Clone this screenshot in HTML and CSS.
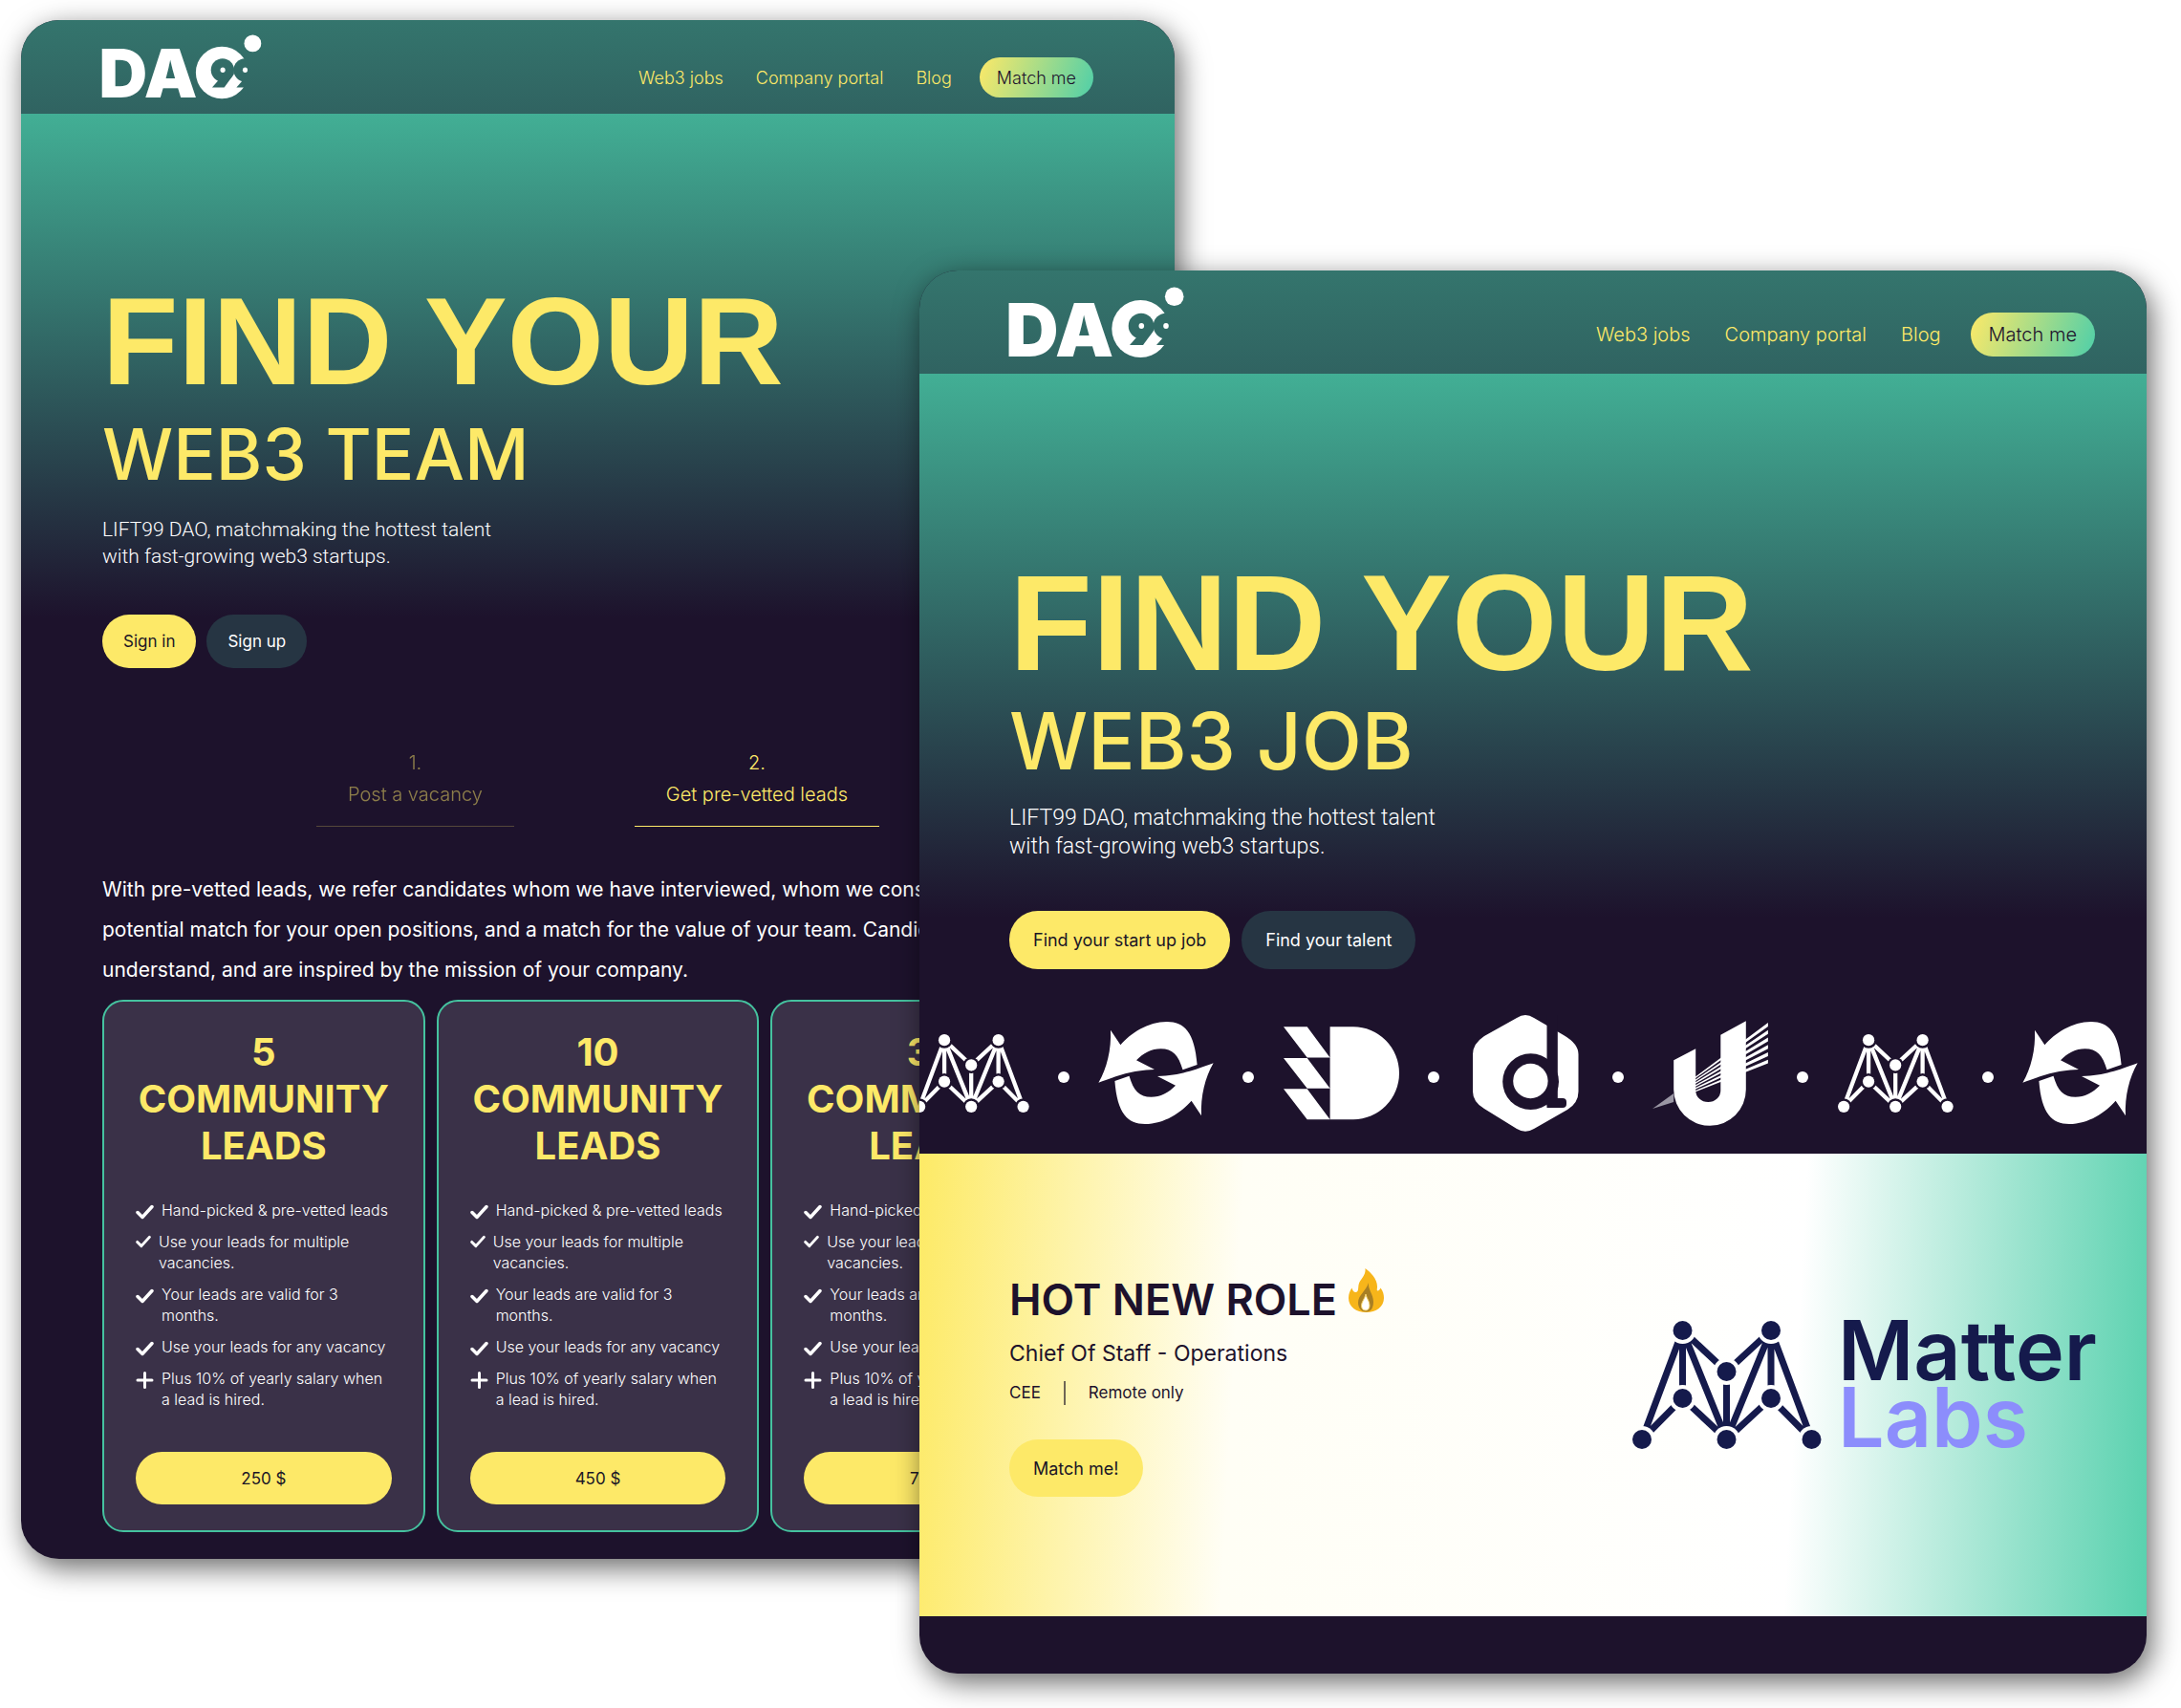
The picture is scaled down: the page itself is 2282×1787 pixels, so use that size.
FILE: index.html
```html
<!DOCTYPE html>
<html lang="en">
<head>
<meta charset="utf-8">
<meta name="viewport" content="width=device-width, initial-scale=1">
<title>LIFT99 DAO – Find your web3 team, find your web3 job</title>
<link rel="stylesheet" href="styles.css">
</head>
<body>
<svg class="sprite" aria-hidden="true">
  <defs>
    <mask id="orbit-cut" maskUnits="userSpaceOnUse" x="0" y="0" width="183" height="78">
      <circle cx="137.3" cy="44" r="30" fill="#fff"/>
      <circle cx="138" cy="41" r="13.3" fill="#000"/>
      <path d="M126 61H140L151 46V38L134 52Z" fill="#000"/>
      <circle cx="164" cy="41" r="13.3" fill="#000"/>
      <path d="M154 61H180V38L162 52Z" fill="#000"/>
      <ellipse cx="138.3" cy="41" rx="2.8" ry="3" fill="#fff"/>
    </mask>
    <mask id="node-gaps" maskUnits="userSpaceOnUse" x="-10" y="-10" width="220" height="154">
      <rect x="-10" y="-10" width="220" height="154" fill="#fff"/>
      <g fill="#000">
        <circle cx="52.5" cy="10" r="14"/><circle cx="145" cy="10" r="14"/><circle cx="98.5" cy="53" r="14"/>
        <circle cx="52.5" cy="81" r="14"/><circle cx="145" cy="81" r="14"/>
        <circle cx="10" cy="124" r="14"/><circle cx="98.5" cy="124" r="14"/><circle cx="187.5" cy="124" r="14"/>
      </g>
    </mask>
    <clipPath id="ray-area"><rect x="45" y="0" width="80" height="122"/></clipPath>
  </defs>
  <symbol id="orbit" viewBox="0 0 183 78">
    <rect width="183" height="78" fill="#fff" mask="url(#orbit-cut)"/>
    <ellipse cx="164" cy="41" rx="2.8" ry="3" fill="#fff"/>
    <circle cx="172.7" cy="10.3" r="9.8" fill="#fff"/>
  </symbol>
  <symbol id="matter" viewBox="0 0 198 134">
    <g mask="url(#node-gaps)">
      <path fill="none" stroke="currentColor" stroke-width="7" d="M52.5 10L10 124M52.5 10V81M52.5 10L98.5 124M52.5 10L98.5 53M52.5 81L10 124M52.5 81L98.5 124M98.5 53V124M145 10L187.5 124M145 10V81M145 10L98.5 124M145 10L98.5 53M145 81L187.5 124M145 81L98.5 124"/>
    </g>
    <g fill="currentColor">
      <circle cx="52.5" cy="10" r="10"/><circle cx="145" cy="10" r="10"/><circle cx="98.5" cy="53" r="10"/>
      <circle cx="52.5" cy="81" r="10"/><circle cx="145" cy="81" r="10"/>
      <circle cx="10" cy="124" r="10"/><circle cx="98.5" cy="124" r="10"/><circle cx="187.5" cy="124" r="10"/>
    </g>
  </symbol>
  <symbol id="arrows" viewBox="0 0 121 122">
    <g fill="currentColor">
      <path id="arrow-half" d="M.4 70.7C9 56 14 36 13 15.7L23.4 31.3C34 19 52 7 72 7C90 7 101 18 103.6 52L88.5 57.3C84 42 78 35.3 65.5 35.3C56 35.3 47 40 40 47.3L59 57C34 58 22 63 .4 70.7Z"/>
      <use href="#arrow-half" transform="rotate(180 60.5 60.5)"/>
    </g>
  </symbol>
  <symbol id="flags" viewBox="0 0 121 122">
    <path fill="currentColor" d="M48.6 12.3H73A48 48.5 0 0 1 73 109.3H48.6ZM0 12.3H24.7L48.6 44.5H24.7ZM0 45H24.7L48.6 76.7H24.7ZM0 77.2H24.7L48.6 109.3H24.7Z"/>
  </symbol>
  <symbol id="hexagon" viewBox="0 0 121 122">
    <path fill="currentColor" d="M51 3Q60 -3 69 3L100 21Q115.5 30 115.5 41V80Q115.5 92 104 99L69 119Q60 124.5 51 119L17 98Q5 91 5 80V41Q5 30 17 22Z"/>
    <g fill="#1d122c">
      <circle cx="65.6" cy="69.7" r="29.4"/>
      <rect x="82.5" y="-5" width="11.3" height="102"/>
      <rect x="82.5" y="87" width="20.5" height="10" rx="4"/>
    </g>
    <circle cx="65.4" cy="69" r="18.2" fill="currentColor"/>
  </symbol>
  <symbol id="rays" viewBox="0 0 121 122">
    <path fill="#9a96a4" d="M0 98L22.2 82V91Z"/>
    <path fill="currentColor" d="M22.2 47.3L45.2 35.3V79A13 12 0 0 0 71.3 79V20.7L97.8 6.3V78A37.8 37.8 0 0 1 22.2 78Z"/>
    <path clip-path="url(#ray-area)" fill="currentColor" d="M0 98L120.9 8V12ZM0 98L120.9 15.8V19.8ZM0 98L120.9 23.5V27.5ZM0 98L120.9 31.2V35.2ZM0 98L120.9 39V43ZM0 98L120.9 46.7V50.5Z"/>
  </symbol>
  <symbol id="check" viewBox="0 0 19 16">
    <path fill="none" stroke="#fff" stroke-width="3.5" stroke-linecap="round" stroke-linejoin="round" d="M2 8.5L7 13.5L17 2.5"/>
  </symbol>
  <symbol id="plus" viewBox="0 0 19 18">
    <path fill="none" stroke="#fff" stroke-width="3" stroke-linecap="round" d="M2 9H17M9.5 1.5V16.5"/>
  </symbol>
</svg>

<main class="stage">
  <section class="window window--team">
    <header class="topbar">
      <a class="brand" href="#team" aria-label="LIFT99 DAO"><svg class="logo" viewBox="0 0 183 78"><text x="-4" y="73">DA</text><use href="#orbit" width="183" height="78"/></svg></a>
      <nav class="menu">
        <a href="#jobs">Web3 jobs</a>
        <a href="#portal">Company portal</a>
        <a href="#blog">Blog</a>
        <button class="pill pill--match" type="button">Match me</button>
      </nav>
    </header>
    <div class="hero">
      <h1 class="title">FIND YOUR</h1>
      <p class="subtitle">WEB3 TEAM</p>
      <p class="lead">LIFT99 DAO, matchmaking the hottest talent<br>with fast-growing web3 startups.</p>
      <div class="actions">
        <button class="pill pill--yellow" type="button">Sign in</button>
        <button class="pill pill--dark" type="button">Sign up</button>
      </div>
    </div>
    <div class="steps">
      <button class="step" type="button">1.<br>Post a vacancy</button>
      <button class="step step--active" type="button">2.<br>Get pre-vetted leads</button>
    </div>
    <p class="about">With pre-vetted leads, we refer candidates whom we have interviewed, whom we consider a<br>potential match for your open positions, and a match for the value of your team. Candidates<br>understand, and are inspired by the mission of your company.</p>
    <div class="plans">
      <article class="plan">
        <h2>5<br>COMMUNITY<br>LEADS</h2>
        <ul>
          <li><svg><use href="#check"/></svg><span>Hand-picked &amp; pre-vetted leads</span></li>
          <li class="tight"><svg><use href="#check"/></svg><span>Use your leads for multiple vacancies.</span></li>
          <li><svg><use href="#check"/></svg><span>Your leads are valid for 3<br>months.</span></li>
          <li><svg><use href="#check"/></svg><span>Use your leads for any vacancy</span></li>
          <li><svg><use href="#plus"/></svg><span>Plus 10% of yearly salary when<br>a lead is hired.</span></li>
        </ul>
        <button class="pill pill--yellow" type="button">250 $</button>
      </article>
      <article class="plan">
        <h2>10<br>COMMUNITY<br>LEADS</h2>
        <ul>
          <li><svg><use href="#check"/></svg><span>Hand-picked &amp; pre-vetted leads</span></li>
          <li class="tight"><svg><use href="#check"/></svg><span>Use your leads for multiple vacancies.</span></li>
          <li><svg><use href="#check"/></svg><span>Your leads are valid for 3<br>months.</span></li>
          <li><svg><use href="#check"/></svg><span>Use your leads for any vacancy</span></li>
          <li><svg><use href="#plus"/></svg><span>Plus 10% of yearly salary when<br>a lead is hired.</span></li>
        </ul>
        <button class="pill pill--yellow" type="button">450 $</button>
      </article>
      <article class="plan">
        <h2>30<br>COMMUNITY<br>LEADS</h2>
        <ul>
          <li><svg><use href="#check"/></svg><span>Hand-picked &amp; pre-vetted leads</span></li>
          <li class="tight"><svg><use href="#check"/></svg><span>Use your leads for multiple vacancies.</span></li>
          <li><svg><use href="#check"/></svg><span>Your leads are valid for 3<br>months.</span></li>
          <li><svg><use href="#check"/></svg><span>Use your leads for any vacancy</span></li>
          <li><svg><use href="#plus"/></svg><span>Plus 10% of yearly salary when<br>a lead is hired.</span></li>
        </ul>
        <button class="pill pill--yellow" type="button">750 $</button>
      </article>
    </div>
  </section>

  <section class="window window--job">
    <header class="topbar">
      <a class="brand" href="#job" aria-label="LIFT99 DAO"><svg class="logo" viewBox="0 0 183 78"><text x="-4" y="73">DA</text><use href="#orbit" width="183" height="78"/></svg></a>
      <nav class="menu">
        <a href="#jobs">Web3 jobs</a>
        <a href="#portal">Company portal</a>
        <a href="#blog">Blog</a>
        <button class="pill pill--match" type="button">Match me</button>
      </nav>
    </header>
    <div class="hero">
      <h1 class="title">FIND YOUR</h1>
      <p class="subtitle">WEB3 JOB</p>
      <p class="lead">LIFT99 DAO, matchmaking the hottest talent<br>with fast-growing web3 startups.</p>
      <div class="actions">
        <button class="pill pill--yellow" type="button">Find your start up job</button>
        <button class="pill pill--dark" type="button">Find your talent</button>
      </div>
    </div>
    <div class="partners">
      <svg><use href="#matter"/></svg><i></i>
      <svg><use href="#arrows"/></svg><i></i>
      <svg><use href="#flags"/></svg><i></i>
      <svg><use href="#hexagon"/></svg><i></i>
      <svg><use href="#rays"/></svg><i></i>
      <svg><use href="#matter"/></svg><i></i>
      <svg><use href="#arrows"/></svg>
    </div>
    <article class="role">
      <div class="role-text">
        <h2>HOT NEW ROLE
          <svg class="fire" viewBox="0 0 37 46" aria-hidden="true">
            <path fill="#f7b51a" d="M17.5 0C23 4 30 11 30 19C30 21 29.5 23 30 23.5C32 23.5 33 22 33.5 20.5C36 24 37 27 37 31C37 40 29 46 18.5 46C8 46 0 40 0 31C0 27 1.5 23 3.5 20.5C4 23 5.5 25 7.5 25C10.5 25 10 20.5 10.5 17.5C11.5 11.5 18.5 8 17.5 0Z"/>
            <path fill="#a87f24" d="M21 15C20 22 26 27 26 35C26 42 23 45.5 18.5 45.5C13 45.5 10 41 10 36C10 28 18 24 21 15Z"/>
            <path fill="#fff" stroke="#f7d36a" stroke-width="1" d="M18 27C19 32 22 34 22 39C22 42.5 20 44 18 44C15 44 13.5 42 13.5 39C13.5 35 17 32 18 27Z"/>
          </svg>
        </h2>
        <p class="role-name">Chief Of Staff - Operations</p>
        <p class="role-meta"><span>CEE</span><span>Remote only</span></p>
        <button class="pill pill--yellow" type="button">Match me!</button>
      </div>
      <svg class="company" viewBox="0 0 484 134" role="img" aria-label="Matter Labs">
        <use href="#matter" width="198" height="134"/>
        <text x="215" y="62">Matter</text>
        <text class="labs" x="215" y="132">Labs</text>
      </svg>
    </article>
  </section>
</main>
</body>
</html>
```
FILE: styles.css
```css
* { box-sizing: border-box; }

body {
  margin: 0;
  background: #fff;
  color: #fff;
  font-family: Inter, "Liberation Sans", sans-serif;
}

h1, h2, p, ul { margin: 0; padding: 0; }
button { font: inherit; color: inherit; border: 0; background: none; cursor: pointer; }
.sprite { position: absolute; width: 0; height: 0; }

/* Two overlapping windows share the middle column */
.stage {
  display: grid;
  grid-template-columns: 940fr 267fr 1017fr;
  align-items: start;
  padding: 21px 36px 36px 22px;
}

.window {
  grid-row: 1;
  overflow: hidden;
  border-radius: 40px;
  background: #1d122c;
  box-shadow: 5px 9px 30px rgba(0, 0, 0, 0.6);
}

.window--team {
  grid-column: 1 / 3;
  padding-bottom: 28px;
  --left: 85px;
  --right: 85px;
  --nav-size: 18px;
  --text-size: 17px;
}

.window--job {
  grid-column: 2 / 4;
  margin-top: 262px;
  padding-bottom: 60px;
  --left: 94px;
  --right: 54px;
  --nav-size: 20px;
  --text-size: 18px;
}

/* Header */
.topbar {
  display: flex;
  justify-content: space-between;
  align-items: flex-end;
  height: 98px;
  padding: 0 var(--right) 12px var(--left);
  background: linear-gradient(#34756d, #306361);
}
.window--job .topbar { height: 108px; padding-bottom: 13px; }

.brand { display: flex; }
.logo { width: 167px; height: 71px; overflow: visible; }
.window--job .logo { width: 183px; height: 78px; }
.logo text { font: 900 77px Inter, "Liberation Sans", sans-serif; fill: #fff; }

.menu {
  display: flex;
  align-items: center;
  gap: 34px;
  padding-bottom: 5px;
  font-size: var(--nav-size);
  font-weight: 300;
}
.window--job .menu { gap: 36px; }
.menu a { color: #fde968; text-decoration: none; }

.pill {
  height: 56px;
  padding: 0 22px;
  border-radius: 30px;
  font-size: var(--text-size);
  white-space: nowrap;
}
.window--job .pill { height: 61px; padding: 0 25px; }
.pill--yellow { background: #fde968; color: #1b1626; }
.pill--dark { background: #263543; color: #fff; }

.menu .pill--match {
  height: 42px;
  margin-left: -5px;
  padding: 0 18px;
  background: linear-gradient(110deg, #fde968, #4fcfa9);
  color: #1d122c;
  font-size: var(--nav-size);
}
.window--job .menu .pill--match { height: 46px; padding: 0 19px; }

/* Hero */
.hero {
  padding: 173px var(--right) 0 var(--left);
  background: linear-gradient(#42af95, #1d122c 528px);
}
.window--job .hero { padding-top: 190px; background: linear-gradient(#42af95, #1d122c 569px); }

.title, .subtitle { color: #fde968; }
.title { font: 700 130px/130px "Liberation Sans", Arial, sans-serif; }
.subtitle { margin-top: 11px; font-size: 74px; line-height: 84px; font-weight: 500; }
.lead { margin-top: 23px; font: 300 21px/28px Roboto, sans-serif; }
.actions { display: flex; gap: 11px; margin-top: 47px; }

.window--job .title { font-size: 142px; line-height: 142px; }
.window--job .subtitle { margin-top: 6px; font-size: 82px; line-height: 93px; }
.window--job .lead { margin-top: 19px; font-size: 23px; line-height: 30px; }
.window--job .actions { gap: 12px; margin-top: 52px; }

/* Steps */
.steps { display: flex; gap: 126px; margin-top: 83px; padding-left: 309px; }
.step {
  padding: 0 33px 16px;
  border-bottom: 1px solid rgba(253, 233, 104, 0.5);
  color: #fde968;
  font-size: 20px;
  line-height: 33px;
  font-weight: 300;
  opacity: 0.5;
}
.step--active { border-color: #fde968; opacity: 1; }

.about {
  margin: 45px 0 10px;
  padding-left: var(--left);
  font-size: 21px;
  line-height: 42px;
  white-space: nowrap;
}

/* Lead packages */
.plans {
  display: grid;
  grid-template-columns: repeat(3, 1fr);
  gap: 12px;
  padding: 0 var(--right) 0 var(--left);
}
.plan {
  display: flex;
  flex-direction: column;
  padding: 28px 33px 27px;
  border: 2px solid #45c29f;
  border-radius: 22px;
  background: #3a3148;
}
.plan h2 {
  color: #fde968;
  font-size: 40px;
  line-height: 49px;
  font-weight: 700;
  text-align: center;
}
.plan ul {
  display: flex;
  flex-direction: column;
  gap: 11px;
  margin: 32px 0 44px;
  font-size: 16px;
  line-height: 22px;
  font-weight: 300;
  list-style: none;
}
.plan li { display: flex; gap: 8px; }
.plan li svg { flex: none; width: 19px; height: 18px; margin-top: 4px; }
.plan li.tight svg { width: 16px; height: 14px; }
.plan .pill { height: 55px; }

/* Partner strip */
.partners {
  display: flex;
  justify-content: space-between;
  align-items: center;
  margin: 48px 9px 23px -6px;
}
.partners svg { flex: none; width: 121px; height: 122px; }
.partners i { width: 12px; height: 12px; margin-top: 7px; border-radius: 50%; background: #fff; }

/* Featured role */
.role {
  display: flex;
  justify-content: space-between;
  align-items: center;
  padding: 128px var(--right) 125px var(--left);
  background: linear-gradient(93deg, #fdea66, #fffef5 26%, #fff 71%, #58d1ae);
  color: #1d122c;
}
.role h2 {
  display: flex;
  gap: 12px;
  font-size: 45px;
  line-height: 50px;
  font-weight: 600;
}
.fire { width: 37px; height: 46px; margin-top: -8px; }
.role-name { margin-top: 16px; font-size: 23px; line-height: 30px; }
.role-meta { display: flex; margin-top: 14px; font-size: 17px; line-height: 25px; }
.role-meta span + span { margin-left: 24px; padding-left: 24px; border-left: 2px solid #6f6655; }
.role .pill { height: 60px; margin-top: 36px; }

.company { width: 484px; height: 134px; margin-bottom: 3px; overflow: visible; color: #151a4c; }
.company text { font: 600 86px Inter, sans-serif; fill: #151a4c; }
.company .labs { fill: #8c8dfc; }
```
